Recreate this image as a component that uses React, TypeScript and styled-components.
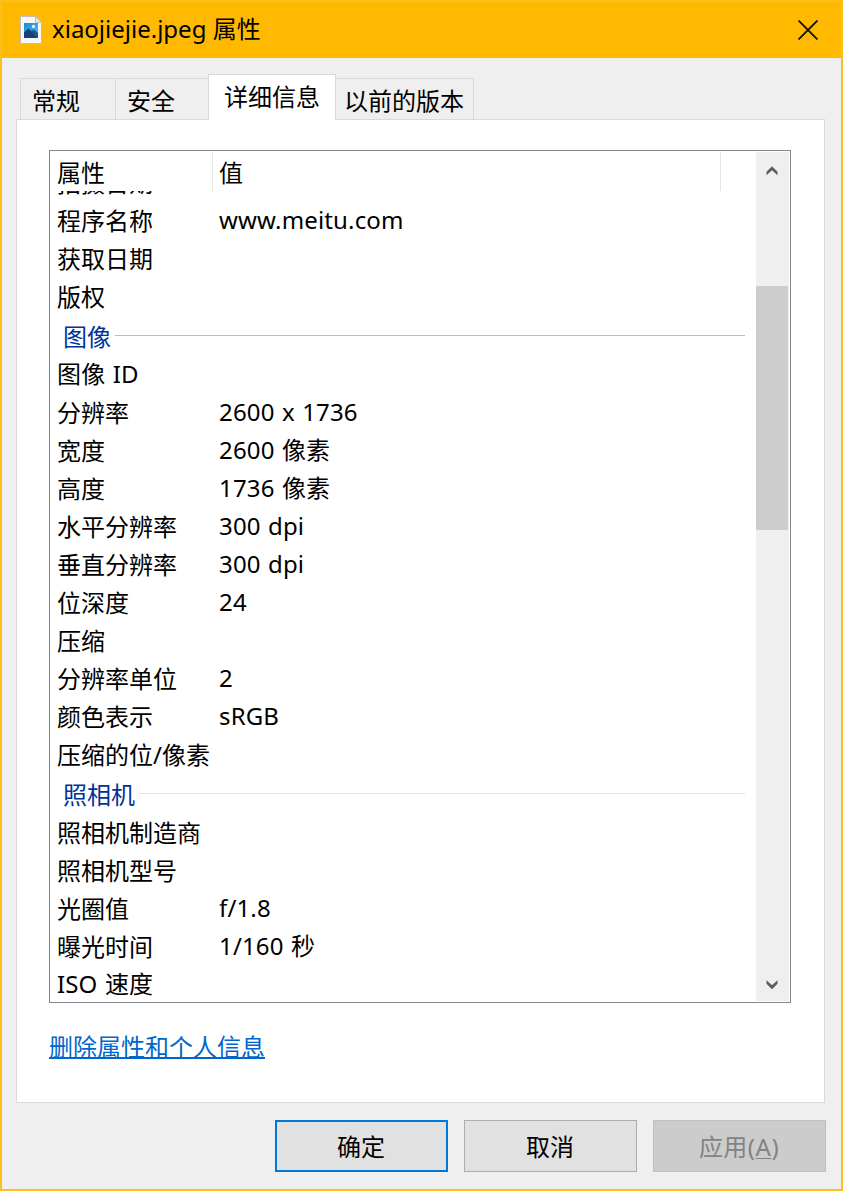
import React from "react";
import styled, { createGlobalStyle, css } from "styled-components";

const GlobalStyle = createGlobalStyle`
  * { box-sizing: border-box; }
  body {
    margin: 0;
    font-family: "Noto Sans", "Noto Sans CJK SC", sans-serif;
    font-size: 24px;
    color: #000;
  }
`;

const Dialog = styled.div`
  width: 843px;
  height: 1191px;
  display: flex;
  flex-direction: column;
  border: 2px solid #fcc01c;
  background: #efefef;
  overflow: hidden;
  white-space: nowrap;
`;

const TitleBar = styled.header`
  flex: none;
  height: 56px;
  display: flex;
  align-items: center;
  padding: 0 23px 0 18px;
  background: #ffb900;
`;

const Title = styled.h1`
  margin: 0 auto 2px 9px;
  font-size: 24px;
  font-weight: 400;
  line-height: 54px;
`;

const CloseButton = styled.button`
  display: flex;
  padding: 0;
  border: 0;
  background: none;
`;

const TabStrip = styled.nav`
  flex: none;
  height: 61px;
  display: flex;
  align-items: flex-end;
  padding-left: 18px;
`;

const Tab = styled.div<{ $width: number; $active?: boolean; $inset: number }>`
  width: ${(p) => p.$width}px;
  height: 41px;
  padding-left: ${(p) => p.$inset}px;
  line-height: 43px;
  border: 1px solid #d9d9d9;
  border-width: 1px 0 0 1px;
  &:last-child { border-right-width: 1px; }
  ${(p) =>
    p.$active &&
    css`
      height: 46px;
      margin-bottom: -1px;
      line-height: 43px;
      border-right-width: 1px;
      background: #fff;
      position: relative;
      & + div { border-left-width: 0; }
    `}
`;

const Page = styled.main`
  flex: none;
  width: 809px;
  height: 984px;
  margin-left: 14px;
  padding: 30px 33px 0 32px;
  border: 1px solid #d9d9d9;
  background: #fff;
`;

const ListBox = styled.section`
  width: 742px;
  height: 853px;
  display: flex;
  border: 1px solid #828790;
  background: #fff;
`;

const ListContent = styled.div`
  width: 706px;
  display: flex;
  flex-direction: column;
`;

const ListHeader = styled.div`
  flex: none;
  height: 40px;
  display: flex;
  padding-top: 1px;
`;

const HeaderCell = styled.div<{ $width: number; $inset: number }>`
  width: ${(p) => p.$width}px;
  padding-left: ${(p) => p.$inset}px;
  border-right: 1px solid #e5e5e5;
  line-height: 42px;
`;

const Viewport = styled.div`
  flex: 1;
  min-height: 0;
  overflow: hidden;
`;

const Rows = styled.div`
  margin-top: -27px;
`;

const Row = styled.div`
  height: 38px;
  display: grid;
  grid-template-columns: 162px 1fr;
  padding-left: 7px;
  word-spacing: 1px;
  line-height: 36px;
`;

const Name = styled.span<{ $latin: boolean }>`
  line-height: ${(p) => (p.$latin ? 36 : 38)}px;
  letter-spacing: ${(p) => (p.$latin ? 0.15 : 0)}px;
`;

const Value = styled.span`
  letter-spacing: 0.15px;
`;

const GroupRow = styled.div`
  height: 40px;
  display: flex;
  padding: 0 11px 0 13px;
  line-height: 41px;
  color: #003399;
`;

const GroupLine = styled.div<{ $color: string }>`
  flex: 1;
  height: 1px;
  margin: 19px 0 0 4px;
  background: ${(p) => p.$color};
`;

const ScrollBar = styled.div`
  width: 33px;
  height: 849px;
  margin-top: 1px;
  display: flex;
  flex-direction: column;
  background: #efefef;
`;

const ArrowButton = styled.div`
  height: 35px;
  display: flex;
  justify-content: center;
  align-items: center;
  padding: 2px 1px 0 0;
`;

const Track = styled.div`
  flex: 1;
  padding-top: 99px;
`;

const Thumb = styled.div`
  width: 32px;
  height: 244px;
  background: #cdcdcd;
`;

const RemoveLink = styled.a`
  display: inline-block;
  margin-top: 24px;
  line-height: 40px;
  color: #0066cc;
  text-decoration: underline;
  text-decoration-thickness: 2px;
  text-underline-offset: 1px;
  text-decoration-skip-ink: none;
`;

const Footer = styled.footer`
  display: flex;
  justify-content: flex-end;
  gap: 16px;
  padding: 17px 15px 0 0;
`;

const Button = styled.button<{ $primary?: boolean }>`
  width: 173px;
  height: 52px;
  padding: 1px 1px 0 0;
  font: inherit;
  line-height: 47px;
  color: #000;
  background: #e1e1e1;
  border: ${(p) => (p.$primary ? "2px solid #0078d7" : "1px solid #adadad")};
  &:disabled {
    letter-spacing: 0.5px;
    color: #838383;
    background: #cccccc;
    border-color: #bfbfbf;
  }
`;

const AccessKey = styled.span`
  text-decoration: underline;
  text-decoration-thickness: 1px;
  text-underline-offset: 2px;
`;

type Entry = { group: string; line: string } | { name: string; value?: string };

const entries: Entry[] = [
  { name: "拍摄日期" },
  { name: "程序名称", value: "www.meitu.com" },
  { name: "获取日期" },
  { name: "版权" },
  { group: "图像", line: "#b0bdd6" },
  { name: "图像 ID" },
  { name: "分辨率", value: "2600 x 1736" },
  { name: "宽度", value: "2600 像素" },
  { name: "高度", value: "1736 像素" },
  { name: "水平分辨率", value: "300 dpi" },
  { name: "垂直分辨率", value: "300 dpi" },
  { name: "位深度", value: "24" },
  { name: "压缩" },
  { name: "分辨率单位", value: "2" },
  { name: "颜色表示", value: "sRGB" },
  { name: "压缩的位/像素" },
  { group: "照相机", line: "#dbe3ee" },
  { name: "照相机制造商" },
  { name: "照相机型号" },
  { name: "光圈值", value: "f/1.8" },
  { name: "曝光时间", value: "1/160 秒" },
  { name: "ISO 速度" },
];

function FileIcon() {
  return (
    <svg width="23" height="30" viewBox="0 0 23 30">
      <defs>
        <linearGradient id="sky" x1="0" y1="0" x2="1" y2="1">
          <stop offset="0" stopColor="#1c8bd8" />
          <stop offset="1" stopColor="#4fbdf0" />
        </linearGradient>
      </defs>
      <path d="M.5 1.5H16L21.5 7V28.5H.5Z" fill="#f7f7f7" stroke="#c3bfb4" />
      <path d="M15.5 1.5V7.5H21.5Z" fill="#e6e6e6" stroke="#c3bfb4" />
      <rect x="4" y="8" width="14" height="15" fill="url(#sky)" />
      <path d="M4 17.5L8.5 13.5L18 22V23H4Z" fill="#173f78" />
      <path d="M11 16L14 14.5L18 18V23H17Z" fill="#24568f" />
      <rect x="12" y="10" width="3" height="3" rx="1" fill="#e8f6ff" />
    </svg>
  );
}

function Chevron({ down }: { down?: boolean }) {
  return (
    <svg width="12" height="10" viewBox="0 0 12 10">
      <path
        d={down ? "M.5 .3L6 5.3L11.5 .3V3.8L6 9.2L.5 3.8Z" : "M.5 9.2L6 4.2L11.5 9.2V5.7L6 .3L.5 5.7Z"}
        fill="#5c5c5c"
      />
    </svg>
  );
}

export default function App() {
  return (
    <>
      <GlobalStyle />
      <Dialog>
        <TitleBar>
          <FileIcon />
          <Title>xiaojiejie.jpeg 属性</Title>
          <CloseButton aria-label="关闭">
            <svg width="20" height="20" viewBox="0 0 20 20">
              <path d="M.5 .5L19.5 19.5M19.5 .5L.5 19.5" stroke="#111" strokeWidth="1.8" />
            </svg>
          </CloseButton>
        </TitleBar>
        <TabStrip>
          <Tab $width={95} $inset={11}>常规</Tab>
          <Tab $width={93} $inset={11}>安全</Tab>
          <Tab $width={128} $inset={15} $active>详细信息</Tab>
          <Tab $width={138} $inset={8}>以前的版本</Tab>
        </TabStrip>
        <Page>
          <ListBox>
            <ListContent>
              <ListHeader>
                <HeaderCell $width={163} $inset={7}>属性</HeaderCell>
                <HeaderCell $width={508} $inset={6}>值</HeaderCell>
              </ListHeader>
              <Viewport>
                <Rows>
                  {entries.map((e) =>
                    "group" in e ? (
                      <GroupRow key={e.group}>
                        {e.group}
                        <GroupLine $color={e.line} />
                      </GroupRow>
                    ) : (
                      <Row key={e.name}>
                        <Name $latin={/[A-Z]/.test(e.name)}>{e.name}</Name>
                        <Value>{e.value}</Value>
                      </Row>
                    ),
                  )}
                </Rows>
              </Viewport>
            </ListContent>
            <ScrollBar>
              <ArrowButton><Chevron /></ArrowButton>
              <Track><Thumb /></Track>
              <ArrowButton><Chevron down /></ArrowButton>
            </ScrollBar>
          </ListBox>
          <RemoveLink>删除属性和个人信息</RemoveLink>
        </Page>
        <Footer>
          <Button $primary>确定</Button>
          <Button>取消</Button>
          <Button disabled>
            应用(<AccessKey>A</AccessKey>)
          </Button>
        </Footer>
      </Dialog>
    </>
  );
}
